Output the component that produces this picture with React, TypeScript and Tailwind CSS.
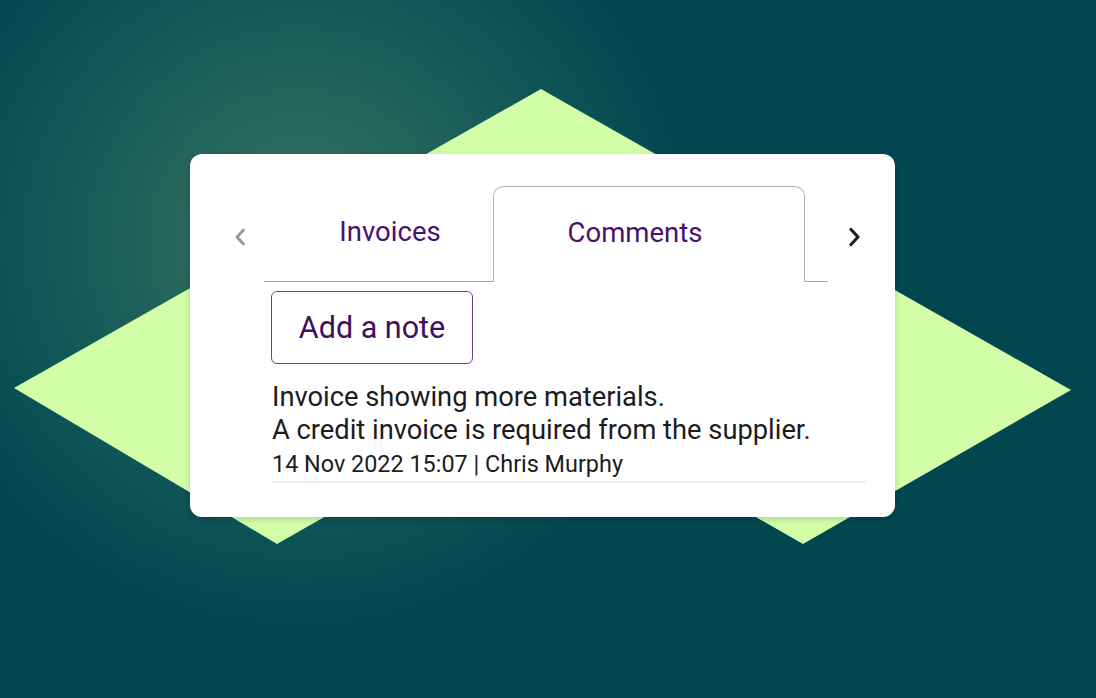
import React from "react";

export default function App() {
  return (
    <div
      className="relative w-[1096px] h-[698px] overflow-hidden bg-[#02474f] bg-[radial-gradient(circle_at_300px_240px,#377663_0%,#24655b_140px,#105557_270px,#02474f_390px)]"
      style={{ fontFamily: "Roboto, 'Liberation Sans', sans-serif" }}
    >
      <svg
        className="absolute inset-0"
        width="1096"
        height="698"
        viewBox="0 0 1096 698"
      >
        <polygon
          points="541,89 1071,390 803,544 540,394 277,544 14,388"
          fill="#d2fea8"
        />
      </svg>

      <div className="relative pt-[154px] pl-[190px]">
        <div className="w-[705px] h-[363px] rounded-[12px] bg-white shadow-[0_2px_6px_rgba(0,0,0,0.18)] pt-[32px]">
          <div className="flex items-stretch">
            <div className="w-[74px] flex items-center justify-end pr-[17px] pt-[6px]">
              <svg width="14" height="20" viewBox="0 0 14 20">
                <path
                  d="M10.5 3 L4 10 L10.5 17"
                  fill="none"
                  stroke="#9a9a9a"
                  strokeWidth="3"
                  strokeLinecap="round"
                  strokeLinejoin="round"
                />
              </svg>
            </div>
            <div className="flex w-[564px] h-[96px]">
              <div className="w-[229px] border-b border-[#a9a9a9] flex justify-center pl-[23px] pt-[30px]">
                <span className="text-[27.5px] leading-[32px] text-[#4a116c]">Invoices</span>
              </div>
              <div className="w-[312px] border border-b-0 border-[#b3b3b3] rounded-t-[10px] flex justify-center pr-[28px] pt-[30px]">
                <span className="text-[27.5px] leading-[32px] text-[#4a116c]">Comments</span>
              </div>
              <div className="w-[23px] border-b border-[#a9a9a9]" />
            </div>
            <div className="w-[67px] flex items-center pl-[19px] pt-[6px]">
              <svg width="15" height="22" viewBox="0 0 15 22">
                <path
                  d="M4 3.5 L11 11 L4 18.5"
                  fill="none"
                  stroke="#1e1e1e"
                  strokeWidth="3.2"
                  strokeLinecap="round"
                  strokeLinejoin="round"
                />
              </svg>
            </div>
          </div>

          <div className="pl-[81px] pr-[29px] pt-[9px]">
            <button className="w-[202px] h-[73px] rounded-[6px] border border-[#6d3f8d] text-[30.5px] text-[#3f105c] flex items-center justify-center">
              Add a note
            </button>
            <div className="pl-[1px] mt-[17px] text-[27.3px] leading-[33px] text-[#1c1c1c]">
              <div>Invoice showing more materials.</div>
              <div>A credit invoice is required from the supplier.</div>
            </div>
            <div className="pl-[1px] mt-[3px] text-[23.4px] leading-[29px] text-[#1c1c1c]">
              14 Nov 2022 15:07 | Chris Murphy
            </div>
            <div className="ml-[1px] mt-[2px] h-[2px] bg-[#ececec]" />
          </div>
        </div>
      </div>
    </div>
  );
}
